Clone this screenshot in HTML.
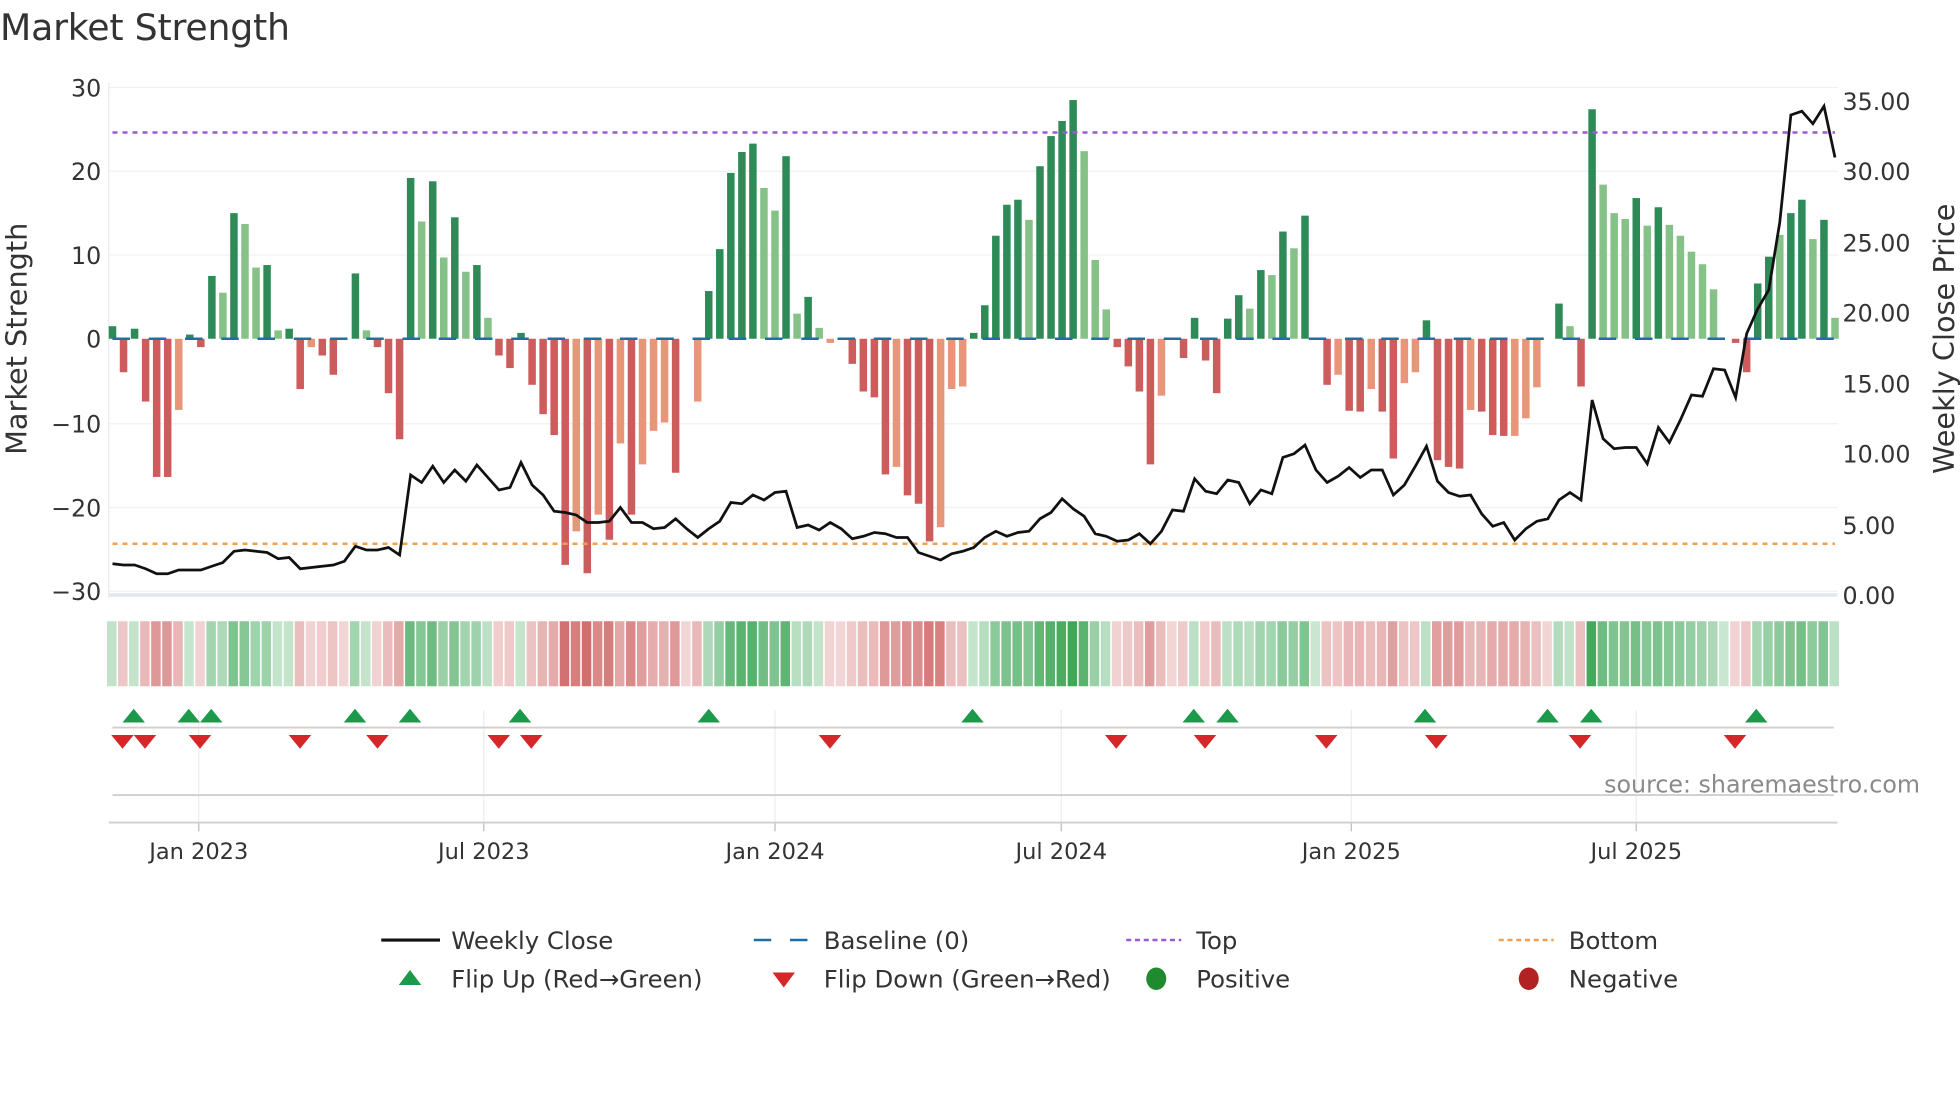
<!DOCTYPE html>
<html><head><meta charset="utf-8"><style>
html,body{margin:0;padding:0;background:#fff;width:1960px;height:1102px;overflow:hidden}
svg{display:block}
text{font-family:"DejaVu Sans","Liberation Sans",sans-serif;fill:#333}
</style></head><body>
<svg id="s" width="1960" height="1102" viewBox="0 0 1568 881.6" xmlns="http://www.w3.org/2000/svg">
<text x="0" y="32" font-size="29" textLength="232">Market Strength</text>
<g id="grid" stroke="#eef0f3" stroke-width="1"></g>
<line x1="87" y1="66" x2="87" y2="478" stroke="#e6e9ee"/>
<line x1="87" y1="476" x2="1470" y2="476" stroke="#e3e9f3" stroke-width="3"/>
<g font-size="19" text-anchor="end">
<text x="81" y="77">30</text><text x="81" y="144">20</text><text x="81" y="211">10</text><text x="81" y="278">0</text>
<text x="81" y="346">−10</text><text x="81" y="413">−20</text><text x="81" y="480">−30</text>
</g>
<g font-size="19">
<text x="1474" y="88">35.00</text><text x="1474" y="144">30.00</text><text x="1474" y="201">25.00</text><text x="1474" y="257">20.00</text>
<text x="1474" y="314">15.00</text><text x="1474" y="370">10.00</text><text x="1474" y="427">5.00</text><text x="1474" y="483">0.00</text>
</g>
<text transform="translate(21,271) rotate(-90)" font-size="23" text-anchor="middle">Market Strength</text>
<text transform="translate(1563,271) rotate(-90)" font-size="23" text-anchor="middle">Weekly Close Price</text>
<g id="bars"></g>
<line x1="90" y1="271" x2="1468" y2="271" stroke="#1f6fa4" stroke-width="2" stroke-dasharray="14 15"/>
<line x1="90" y1="106" x2="1468" y2="106" stroke="#9b59d6" stroke-width="2" stroke-dasharray="4 4"/>
<line x1="90" y1="435" x2="1468" y2="435" stroke="#f0a050" stroke-width="2" stroke-dasharray="4 4"/>
<polyline id="price" fill="none" stroke="#111" stroke-width="2.2"/>
<g id="strip"></g>
<g id="vgrid" stroke="#eceef2"></g>
<line x1="90" y1="582" x2="1467" y2="582" stroke="#cfcfcf" stroke-width="1.5"/>
<line x1="90" y1="636" x2="1467" y2="636" stroke="#cfcfcf" stroke-width="1.5"/>
<line x1="87" y1="658" x2="1470" y2="658" stroke="#cfcfcf" stroke-width="1.5"/>
<g id="flips"></g>
<text x="1536" y="634" font-size="19" text-anchor="end" style="fill:#8a8a8a">source: sharemaestro.com</text>
<g font-size="18" text-anchor="middle">
<text x="159" y="687">Jan 2023</text><text x="387" y="687">Jul 2023</text><text x="620" y="687">Jan 2024</text>
<text x="849" y="687">Jul 2024</text><text x="1081" y="687">Jan 2025</text><text x="1309" y="687">Jul 2025</text>
</g>
<g font-size="19.5">
<line x1="305" y1="752" x2="352" y2="752" stroke="#111" stroke-width="2.5"/><text x="361" y="759">Weekly Close</text>
<line x1="603" y1="752" x2="647" y2="752" stroke="#1f6fa4" stroke-width="2" stroke-dasharray="14 15"/><text x="659" y="759">Baseline (0)</text>
<line x1="901" y1="752" x2="945" y2="752" stroke="#9b59d6" stroke-width="2" stroke-dasharray="4 3"/><text x="957" y="759">Top</text>
<line x1="1199" y1="752" x2="1243" y2="752" stroke="#f0a050" stroke-width="2" stroke-dasharray="4 3"/><text x="1255" y="759">Bottom</text>
<polygon points="319,788 337,788 328,776" fill="#1a9a4a"/><text x="361" y="790">Flip Up (Red→Green)</text>
<polygon points="618,778 636,778 627,790" fill="#d62728"/><text x="659" y="790">Flip Down (Green→Red)</text>
<ellipse cx="925" cy="783" rx="8" ry="9" fill="#1f8a2e"/><text x="957" y="790">Positive</text>
<ellipse cx="1223" cy="783" rx="8" ry="9" fill="#b22222"/><text x="1255" y="790">Negative</text>
</g>
</svg>
<script>
var NS="http://www.w3.org/2000/svg";
function el(p,t,a){var e=document.createElementNS(NS,t);for(var k in a)e.setAttribute(k,a[k]);document.getElementById(p).appendChild(e);return e;}
[70,137,204,339,406,473].forEach(function(y){el("grid","line",{x1:87,y1:y,x2:1470,y2:y});});
[159,387,620,849,1081,1309].forEach(function(x){el("vgrid","line",{x1:x,y1:568,x2:x,y2:658});el("vgrid","line",{x1:x,y1:658,x2:x,y2:665,stroke:"#bbb"});});
var B=[[1.5,0],[-4,0],[1.2,0],[-7.5,0],[-16.5,0],[-16.5,0],[-8.5,1],[0.5,0],[-1,0],[7.5,0],[5.5,1],[15,0],[13.7,1],[8.5,1],[8.8,0],[1,1],[1.2,0],[-6,0],[-1,1],[-2,0],[-4.3,0],[0,0],[7.8,0],[1,1],[-1,0],[-6.5,0],[-12,0],[19.2,0],[14,1],[18.8,0],[9.7,1],[14.5,0],[8,1],[8.8,0],[2.5,1],[-2,0],[-3.5,0],[0.7,0],[-5.5,0],[-9,0],[-11.5,0],[-27,0],[-23,1],[-28,0],[-21,1],[-24,0],[-12.5,1],[-21,0],[-15,1],[-11,1],[-10,1],[-16,0],[0,0],[-7.5,1],[5.7,0],[10.7,0],[19.8,0],[22.3,0],[23.3,0],[18,1],[15.3,1],[21.8,0],[3,1],[5,0],[1.3,1],[-0.5,1],[0,0],[-3,0],[-6.3,0],[-7,0],[-16.2,0],[-15.3,1],[-18.7,0],[-19.7,0],[-24.2,0],[-22.5,1],[-6,1],[-5.7,1],[0.7,0],[4,0],[12.3,0],[16,0],[16.6,0],[14.2,1],[20.6,0],[24.2,0],[26,0],[28.5,0],[22.4,1],[9.4,1],[3.5,1],[-1,0],[-3.3,0],[-6.3,0],[-15,0],[-6.8,1],[0,0],[-2.3,0],[2.5,0],[-2.6,0],[-6.5,0],[2.4,0],[5.2,0],[3.6,1],[8.2,0],[7.6,1],[12.8,0],[10.8,1],[14.7,0],[0,0],[-5.5,0],[-4.3,1],[-8.6,0],[-8.7,0],[-6,1],[-8.7,0],[-14.3,0],[-5.3,1],[-4,1],[2.2,0],[-14.5,0],[-15.3,0],[-15.5,0],[-8.5,1],[-8.7,0],[-11.5,0],[-11.6,0],[-11.6,1],[-9.5,1],[-5.8,1],[0,0],[4.2,0],[1.5,1],[-5.7,0],[27.4,0],[18.4,1],[15,1],[14.3,1],[16.8,0],[13.5,1],[15.7,0],[13.6,1],[12.3,1],[10.4,1],[8.9,1],[5.9,1],[0,0],[-0.5,0],[-4,0],[6.6,0],[9.8,0],[12.4,1],[15,0],[16.6,0],[11.9,1],[14.2,0],[2.5,1]];
var step=(1468-90)/156;
B.forEach(function(b,i){
 var x=90+i*step,v=b[0],h=Math.abs(v)*6.7;
 var c=v>=0?(b[1]?"#86c287":"#2e8b57"):(b[1]?"#e8967a":"#cd5c5c");
 if(h>0.1)el("bars","rect",{x:x-3,y:v>=0?271-h:271,width:6,height:h,fill:c});
 var m=Math.min(1,Math.abs(v)/28),a=0.28+0.7*m;
 var pos=v>=0; if(v==0&&i>0)pos=B[i-1][0]>=0;
 var col=pos?"rgba(60,165,85,"+a.toFixed(2)+")":"rgba(200,80,80,"+(a*0.85).toFixed(2)+")";
 el("strip","rect",{x:x-4.4,y:497,width:7.6,height:52,fill:col});
});
var P=[451,452,452,455,459,459,456,456,456,453,450,441,440,441,442,447,446,455,454,453,452,449,437,440,440,438,444,380,386,373,386,376,385,372,382,392,390,370,388,396,409,410,412,418,418,417,406,418,418,423,422,415,423,430,423,417,402,403,396,400,394,393,422,420,424,418,423,431,429,426,427,430,430,442,445,448,443,441,438,430,425,429,426,425,415,410,399,407,413,427,429,433,432,427,435,425,408,409,383,393,395,384,386,403,392,395,366,363,356,376,386,381,374,382,376,376,396,388,373,357,385,394,397,396,411,421,418,432,423,417,415,400,394,400,320,351,359,358,358,371,342,354,336,316,317,295,296,318,267,247,232,178,92,89,99,85,126];
document.getElementById("price").setAttribute("points",P.map(function(y,i){return (90+i*step).toFixed(1)+","+y;}).join(" "));
[107,151,169,284,328,416,567,778,955,982,1140,1238,1273,1405].forEach(function(x){el("flips","polygon",{points:(x-9)+",578 "+(x+9)+",578 "+x+",567",fill:"#1a9a4a"});});
[98,116,160,240,302,399,425,664,893,964,1061,1149,1264,1388].forEach(function(x){el("flips","polygon",{points:(x-9)+",588 "+(x+9)+",588 "+x+",599",fill:"#d62728"});});
</script>
</body></html>
